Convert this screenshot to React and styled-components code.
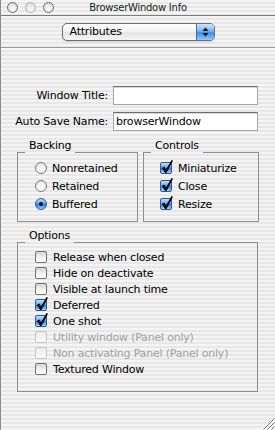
import React from 'react';
import styled, { createGlobalStyle, css } from 'styled-components';

const Global = createGlobalStyle`
  html, body { margin: 0; padding: 0; background: #ececec; }
  body {
    font-family: "DejaVu Sans", "Liberation Sans", sans-serif;
    font-size: 11px;
    letter-spacing: -0.2px;
    color: #000;
  }
`;

const stripes = css`
  background: repeating-linear-gradient(
    to bottom,
    #f4f4f4 0px, #f4f4f4 2px,
    #e7e7e7 2px, #e7e7e7 4px
  );
`;

const Window = styled.div`
  position: relative;
  width: 275px;
  height: 430px;
  box-sizing: border-box;
  border-left: 1px solid #8c8c8c;
  ${stripes}
  display: flex;
  flex-direction: column;
  overflow: hidden;
`;

const TitleBar = styled.div`
  height: 15px;
  border-bottom: 1px solid #7c7c7c;
  display: grid;
  grid-template-columns: 1fr auto 1fr;
  align-items: center;
`;

const Lights = styled.div`
  display: flex;
  gap: 7px;
  padding-left: 6px;
  align-items: center;
`;

const Light = styled.span`
  width: 11px;
  height: 11px;
  box-sizing: border-box;
  border-radius: 50%;
  border: 1.5px solid ${p => (p.$dim ? '#b4b4b4' : '#6a6a6a')};
  background: radial-gradient(circle at 50% 65%, #fbfbfb 0%, #e6e6e6 55%, #c9c9c9 100%);
`;

const Title = styled.div`
  font-size: 10px;
  letter-spacing: -0.25px;
  line-height: 15px;
  color: #1a1a1a;
  white-space: nowrap;
`;

const PopupBar = styled.div`
  display: flex;
  justify-content: center;
  padding: 7px 0 6px;
  border-bottom: 1px solid #9c9c9c;
  box-shadow: 0 1px 0 #fafafa;
`;

const Popup = styled.div`
  width: 153px;
  height: 18px;
  box-sizing: border-box;
  border: 1px solid #6e6e6e;
  border-radius: 5px;
  display: flex;
  overflow: hidden;
  background: linear-gradient(#ffffff 0%, #f4f4f4 45%, #e4e4e4 55%, #f6f6f6 100%);
  box-shadow: 0 1px 1px rgba(0, 0, 0, 0.15);
`;

const PopupText = styled.div`
  flex: 1;
  padding-left: 7px;
  line-height: 16px;
  font-size: 11px;
`;

const PopupArrows = styled.div`
  width: 17px;
  border-left: 1px solid #3d6fb4;
  background: linear-gradient(#cfe6ff 0%, #77b3f2 45%, #3e8be6 55%, #8cc9ff 100%);
  display: flex;
  align-items: center;
  justify-content: center;
`;

const Form = styled.div`
  margin-top: 38px;
  display: grid;
  grid-template-columns: 107px 145px;
  column-gap: 5px;
  row-gap: 7px;
`;

const FieldLabel = styled.div`
  text-align: right;
  line-height: 19px;
  white-space: nowrap;
`;

const Field = styled.div`
  height: 19px;
  box-sizing: border-box;
  background: #fff;
  border: 1px solid #a4a4a4;
  border-top-color: #6e6e6e;
  box-shadow: inset 0 1px 0 #d8d8d8;
  padding-left: 2px;
  line-height: 17px;
  white-space: nowrap;
`;

const BoxRow = styled.div`
  margin-top: 8px;
  padding-left: 16px;
  display: flex;
  gap: 5px;
`;

const Group = styled.div`
  width: ${p => p.$w}px;
  margin-top: ${p => p.$mt || 0}px;
  margin-left: ${p => p.$ml || 0}px;
  display: flex;
  flex-direction: column;
`;

const GroupHead = styled.div`
  height: 14px;
  display: flex;
  align-items: stretch;
`;

const HeadLine = styled.div`
  box-sizing: border-box;
  border-bottom: 1px solid #8e8e8e;
  ${p => (p.$grow ? 'flex: 1;' : 'width: 8px;')}
`;

const GroupLabel = styled.div`
  padding: 0 4px;
  line-height: 13px;
  white-space: nowrap;
`;

const GroupBody = styled.div`
  border: 1px solid #8e8e8e;
  border-top: none;
  padding: 6px 0 ${p => p.$pb}px ${p => p.$pl}px;
  display: flex;
  flex-direction: column;
`;

const Item = styled.div`
  height: ${p => p.$h}px;
  display: flex;
  align-items: center;
  gap: ${p => p.$gap || 5}px;
  white-space: nowrap;
  color: ${p => (p.$disabled ? '#a2a2a2' : '#000')};
`;

const aquaBlue = 'linear-gradient(#c2e0fd 0%, #6fb0f2 40%, #2f80e2 55%, #63acf5 80%, #a9d8ff 100%)';

const CheckBox = styled.span`
  position: relative;
  flex: none;
  width: 12px;
  height: 12px;
  box-sizing: border-box;
  border: 1px solid ${p => (p.$checked ? '#34588a' : p.$disabled ? '#c6c6c6' : '#707070')};
  border-radius: 2px;
  background: ${p =>
    p.$checked
      ? aquaBlue
      : p.$disabled
      ? 'linear-gradient(#ececec, #f8f8f8)'
      : 'linear-gradient(#d4d4d4 0%, #f0f0f0 50%, #ffffff 100%)'};
`;

const CheckMark = styled.svg`
  position: absolute;
  left: -1px;
  top: -4px;
  overflow: visible;
`;

const Radio = styled.span`
  position: relative;
  flex: none;
  width: 12px;
  height: 12px;
  box-sizing: border-box;
  border-radius: 50%;
  border: 1px solid ${p => (p.$on ? '#34588a' : '#7a7a7a')};
  background: ${p =>
    p.$on ? aquaBlue : 'radial-gradient(circle at 50% 70%, #ffffff 0%, #f2f2f2 50%, #cfcfcf 100%)'};
  display: flex;
  align-items: center;
  justify-content: center;
`;

const Dot = styled.span`
  width: 4px;
  height: 4px;
  border-radius: 50%;
  background: #111;
`;

const Grip = styled.svg`
  position: absolute;
  right: 0;
  bottom: 0;
`;

function Check({ checked, disabled }) {
  return (
    <CheckBox $checked={checked} $disabled={disabled}>
      {checked && (
        <CheckMark width="14" height="16" viewBox="0 0 14 16">
          <polygon points="2,9 4.2,7.6 6,10.4 11.6,1 13,1.8 6.4,14 5.2,14" fill="#000" />
        </CheckMark>
      )}
    </CheckBox>
  );
}

function GroupBox({ label, w, mt, ml, pb, pl, children }) {
  return (
    <Group $w={w} $mt={mt} $ml={ml}>
      <GroupHead>
        <HeadLine />
        <GroupLabel>{label}</GroupLabel>
        <HeadLine $grow />
      </GroupHead>
      <GroupBody $pb={pb} $pl={pl}>{children}</GroupBody>
    </Group>
  );
}

const options = [
  { t: 'Release when closed' },
  { t: 'Hide on deactivate' },
  { t: 'Visible at launch time' },
  { t: 'Deferred', c: true },
  { t: 'One shot', c: true },
  { t: 'Utility window (Panel only)', d: true },
  { t: 'Non activating Panel (Panel only)', d: true },
  { t: 'Textured Window' },
];

export default function App() {
  return (
    <>
      <Global />
      <Window>
        <TitleBar>
          <Lights>
            <Light />
            <Light $dim />
            <Light />
          </Lights>
          <Title>BrowserWindow Info</Title>
          <div />
        </TitleBar>

        <PopupBar>
          <Popup>
            <PopupText>Attributes</PopupText>
            <PopupArrows>
              <svg width="7" height="10" viewBox="0 0 7 10">
                <polygon points="3.5,0.5 6.5,4 0.5,4" fill="#111" />
                <polygon points="0.5,6 6.5,6 3.5,9.5" fill="#111" />
              </svg>
            </PopupArrows>
          </Popup>
        </PopupBar>

        <Form>
          <FieldLabel>Window Title:</FieldLabel>
          <Field />
          <FieldLabel>Auto Save Name:</FieldLabel>
          <Field>browserWindow</Field>
        </Form>

        <BoxRow>
          <GroupBox label="Backing" w={121} pb={8} pl={17}>
            <Item $h={18}><Radio /><span>Nonretained</span></Item>
            <Item $h={18}><Radio /><span>Retained</span></Item>
            <Item $h={18}><Radio $on><Dot /></Radio><span>Buffered</span></Item>
          </GroupBox>
          <GroupBox label="Controls" w={116} pb={8} pl={16}>
            <Item $h={18} $gap={6}><Check checked /><span>Miniaturize</span></Item>
            <Item $h={18} $gap={6}><Check checked /><span>Close</span></Item>
            <Item $h={18} $gap={6}><Check checked /><span>Resize</span></Item>
          </GroupBox>
        </BoxRow>

        <GroupBox label="Options" w={241} mt={7} ml={16} pb={14} pl={17}>
          {options.map(o => (
            <Item key={o.t} $h={16} $gap={6} $disabled={o.d}>
              <Check checked={o.c} disabled={o.d} />
              <span>{o.t}</span>
            </Item>
          ))}
        </GroupBox>

        <Grip width="14" height="14" viewBox="0 0 14 14">
          <g strokeWidth="1">
            <line x1="13.5" y1="2.5" x2="2.5" y2="13.5" stroke="#7a7a7a" />
            <line x1="14" y1="3.5" x2="3.5" y2="14" stroke="#ffffff" />
            <line x1="13.5" y1="6.5" x2="6.5" y2="13.5" stroke="#7a7a7a" />
            <line x1="14" y1="7.5" x2="7.5" y2="14" stroke="#ffffff" />
            <line x1="13.5" y1="10.5" x2="10.5" y2="13.5" stroke="#7a7a7a" />
            <line x1="14" y1="11.5" x2="11.5" y2="14" stroke="#ffffff" />
          </g>
        </Grip>
      </Window>
    </>
  );
}
